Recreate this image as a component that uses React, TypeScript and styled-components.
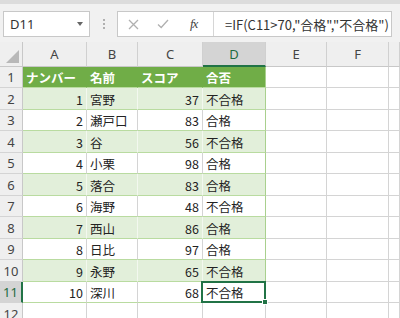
import React from "react";
import styled, { createGlobalStyle } from "styled-components";

const Global = createGlobalStyle`
  html, body { margin: 0; padding: 0; background: #ffffff; overflow: hidden; }
  * { box-sizing: border-box; }
`;

const Page = styled.div`
  width: 400px;
  height: 318px;
  display: flex;
  flex-direction: column;
  overflow: hidden;
  font-family: "Noto Sans CJK JP", "Noto Sans", sans-serif;
`;

const Toolbar = styled.div`
  height: 42px;
  flex: none;
  background: #f1f1f1;
  border-top: 4px solid #dcdcdc;
  display: flex;
  align-items: flex-start;
  padding: 7px 0 0 3px;
`;

const NameBox = styled.div`
  width: 87px;
  height: 26px;
  background: #ffffff;
  border: 1px solid #c8c8c8;
  display: flex;
  align-items: center;
  justify-content: space-between;
  padding: 0 6px 0 6px;
  font-family: "Noto Sans", sans-serif;
  font-size: 13px;
  color: #333333;
`;

const Caret = styled.span`
  width: 0;
  height: 0;
  border-left: 3.5px solid transparent;
  border-right: 3.5px solid transparent;
  border-top: 4px solid #666666;
`;

const Dots = styled.div`
  width: 27px;
  height: 26px;
  display: flex;
  flex-direction: column;
  align-items: center;
  justify-content: center;
  gap: 2px;
  span {
    width: 2px;
    height: 2px;
    background: #9a9a9a;
    border-radius: 1px;
  }
`;

const FormulaGroup = styled.div`
  width: 275px;
  height: 26px;
  background: #ffffff;
  border: 1px solid #c8c8c8;
  display: flex;
  align-items: center;
`;

const BarButtons = styled.div`
  width: 96px;
  height: 100%;
  display: flex;
  align-items: center;
  padding-left: 10px;
  border-right: 1px solid #d6d6d6;
`;

const IconSlot = styled.span<{ $gap: number }>`
  display: flex;
  align-items: center;
  margin-right: ${(p) => p.$gap}px;
`;

const Fx = styled.span`
  font-family: "Liberation Serif", serif;
  font-style: italic;
  font-size: 13px;
  color: #444444;
  letter-spacing: -1px;
`;

const FormulaText = styled.div`
  flex: 1;
  padding-left: 11px;
  font-size: 13px;
  color: #333333;
  white-space: nowrap;
  overflow: hidden;
`;

const Sheet = styled.div`
  flex: 1;
  display: grid;
  grid-template-columns: 23px 64px 51px 65px 63px 61px 62px 11px;
  grid-template-rows: 25px 21px 22px 21px 22px 21px 22px 21px 22px 21px 22px 21px 22px;
`;

const Corner = styled.div`
  background: #efefef;
  border-right: 1px solid #c8c8c8;
  border-bottom: 1px solid #c8c8c8;
  position: relative;
  &::after {
    content: "";
    position: absolute;
    right: 3px;
    bottom: 3px;
    width: 0;
    height: 0;
    border-left: 13px solid transparent;
    border-bottom: 13px solid #b8b8b8;
  }
`;

const ColHead = styled.div<{ $sel?: boolean }>`
  background: ${(p) => (p.$sel ? "#d4d4d4" : "#efefef")};
  border-right: 1px solid #d0d0d0;
  border-bottom: ${(p) => (p.$sel ? "2px solid #217346" : "1px solid #c8c8c8")};
  display: flex;
  align-items: center;
  justify-content: center;
  padding-top: ${(p) => (p.$sel ? "1px" : "0")};
  font-family: "Noto Sans", sans-serif;
  font-size: 13px;
  color: ${(p) => (p.$sel ? "#1e6b40" : "#444444")};
`;

const RowHead = styled.div<{ $sel?: boolean }>`
  background: ${(p) => (p.$sel ? "#d4d4d4" : "#efefef")};
  border-right: ${(p) => (p.$sel ? "2px solid #217346" : "1px solid #c8c8c8")};
  border-bottom: 1px solid #d4d4d4;
  display: flex;
  align-items: center;
  justify-content: center;
  font-family: "Noto Sans", sans-serif;
  font-size: 13px;
  color: ${(p) => (p.$sel ? "#1e6b40" : "#444444")};
`;

type Kind = "head" | "band" | "plain" | "grid";

const bgFor = (k: Kind) =>
  k === "head" ? "#70ad47" : k === "band" ? "#e2efda" : "#ffffff";

const Cell = styled.div<{ $kind: Kind; $right?: boolean; $edge?: boolean }>`
  position: relative;
  background: ${(p) => bgFor(p.$kind)};
  border-right: 1px solid
    ${(p) =>
      p.$edge
        ? "#a9d08e"
        : p.$kind === "head"
        ? "#70ad47"
        : p.$kind === "band"
        ? "#f3f8ef"
        : "#d4d4d4"};
  border-bottom: 1px solid
    ${(p) => (p.$kind === "grid" ? "#d4d4d4" : "#b9dba0")};
  display: flex;
  align-items: center;
  justify-content: ${(p) => (p.$right ? "flex-end" : "flex-start")};
  padding: 1px 3px 0 3px;
  font-size: 12.5px;
  font-weight: ${(p) => (p.$kind === "head" ? 700 : 400)};
  color: ${(p) => (p.$kind === "head" ? "#ffffff" : "#222222")};
  white-space: nowrap;
`;

const Selection = styled.div`
  position: absolute;
  top: -1px;
  left: -2px;
  right: -1px;
  bottom: -1px;
  border: 2px solid #217346;
  z-index: 2;
  pointer-events: none;
`;

const Handle = styled.div`
  position: absolute;
  right: -4px;
  bottom: -4px;
  width: 6px;
  height: 6px;
  background: #217346;
  border: 1px solid #ffffff;
`;

const data: [number, string, number, string][] = [
  [1, "宮野", 37, "不合格"],
  [2, "瀬戸口", 83, "合格"],
  [3, "谷", 56, "不合格"],
  [4, "小栗", 98, "合格"],
  [5, "落合", 83, "合格"],
  [6, "海野", 48, "不合格"],
  [7, "西山", 86, "合格"],
  [8, "日比", 97, "合格"],
  [9, "永野", 65, "不合格"],
  [10, "深川", 68, "不合格"],
];

const cols = ["A", "B", "C", "D", "E", "F", ""];

const XIcon = () => (
  <svg width="11" height="11" viewBox="0 0 11 11">
    <path d="M1 1L10 10M10 1L1 10" stroke="#b0b0b0" strokeWidth="1.3" fill="none" />
  </svg>
);

const CheckIcon = () => (
  <svg width="12" height="10" viewBox="0 0 12 10">
    <path d="M1 5.5L4.2 8.5L11 1" stroke="#b0b0b0" strokeWidth="1.3" fill="none" />
  </svg>
);

export default function App() {
  return (
    <Page>
      <Global />
      <Toolbar>
        <NameBox>
          <span>D11</span>
          <Caret />
        </NameBox>
        <Dots>
          <span />
          <span />
          <span />
        </Dots>
        <FormulaGroup>
          <BarButtons>
            <IconSlot $gap={18}>
              <XIcon />
            </IconSlot>
            <IconSlot $gap={21}>
              <CheckIcon />
            </IconSlot>
            <Fx>fx</Fx>
          </BarButtons>
          <FormulaText>=IF(C11&gt;70,"合格","不合格")</FormulaText>
        </FormulaGroup>
      </Toolbar>
      <Sheet>
        <Corner />
        {cols.map((c, i) => (
          <ColHead key={i} $sel={c === "D"}>
            {c}
          </ColHead>
        ))}

        <RowHead>1</RowHead>
        <Cell $kind="head">ナンバー</Cell>
        <Cell $kind="head">名前</Cell>
        <Cell $kind="head">スコア</Cell>
        <Cell $kind="head" $edge>
          合否
        </Cell>
        <Cell $kind="grid" />
        <Cell $kind="grid" />
        <Cell $kind="grid" />

        {data.map(([n, name, score, res], i) => {
          const kind: Kind = i % 2 === 0 ? "band" : "plain";
          const row = i + 2;
          const sel = row === 11;
          return (
            <React.Fragment key={row}>
              <RowHead $sel={sel}>{row}</RowHead>
              <Cell $kind={kind} $right>
                {n}
              </Cell>
              <Cell $kind={kind}>{name}</Cell>
              <Cell $kind={kind} $right>
                {score}
              </Cell>
              <Cell $kind={kind} $edge>
                {res}
                {sel && (
                  <Selection>
                    <Handle />
                  </Selection>
                )}
              </Cell>
              <Cell $kind="grid" />
              <Cell $kind="grid" />
              <Cell $kind="grid" />
            </React.Fragment>
          );
        })}

        <RowHead>12</RowHead>
        {cols.map((c, i) => (
          <Cell key={i} $kind="grid" />
        ))}
      </Sheet>
    </Page>
  );
}
